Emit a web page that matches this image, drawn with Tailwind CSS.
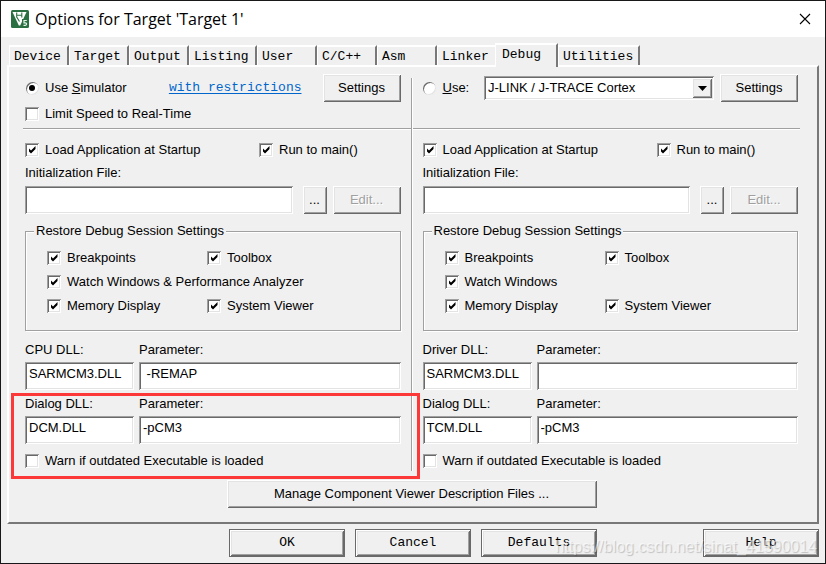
<!DOCTYPE html>
<html lang="en">
<head>
<meta charset="utf-8">
<title>Options for Target 'Target 1'</title>
<script src="https://cdn.jsdelivr.net/npm/@tailwindcss/browser@4"></script>
</head>
<body class="bg-[#f0f0f0] text-black">
<svg class="hidden" aria-hidden="true">
  <symbol id="tick" viewBox="0 0 14 14"><path d="M4 5.5v3l2 2 4.5-4.500v-3L6 7.500z" fill="#000"/></symbol>
</svg>
<div class="relative flex min-h-screen flex-col border border-[#1a171b] bg-[#f0f0f0] font-['Liberation_Sans',Arial,sans-serif] text-[13px] leading-5">
  <header class="flex h-9 items-center bg-white pl-[10px] pr-[14px]">
    <svg class="size-[18px]" viewBox="0 0 18 18" aria-hidden="true">
      <rect width="18" height="18" rx="1.500" fill="#2a6f42"/>
      <path d="M1.500 2H15.500L9.200 15.500H7.800z" fill="#fff"/>
      <path d="M5.700 2.500v5M10.800 2.500v5M5.700 7l2.800 4.500M6 5.200h4.500" fill="none" stroke="#2a6f42" stroke-width="1.100"/>
      <path d="M11 9h6v8h-6z" fill="#2a6f42"/>
      <path d="M15.800 10.500h-2.800v2.300h1.300q1.300.1 1.300 1.300t-1.300 1.300H12.500" fill="none" stroke="#e6f2ea" stroke-width="1.200"/>
    </svg>
    <h1 class="ml-[6px] flex-1 font-['Open_Sans','Noto_Sans',sans-serif] text-[16px]">Options for Target 'Target 1'</h1>
    <button aria-label="Close" class="size-3"><svg viewBox="0 0 12 12" class="size-3"><path d="M1 1l10 10M11 1L1 11" stroke="#000" stroke-width="1.100"/></svg></button>
  </header>

  <nav role="tablist" class="mt-[6px] flex items-end pl-[8px] font-['Liberation_Mono','Courier_New',monospace] text-[13px]">
    <button role="tab" class="h-5 w-[60px] border-t-2 border-l border-r-2 border-t-white border-l-white border-r-[#787878] pl-1 text-left">Device</button>
    <button role="tab" class="h-5 w-[60px] border-t-2 border-l border-r-2 border-t-white border-l-white border-r-[#787878] pl-1 text-left">Target</button>
    <button role="tab" class="h-5 w-[60px] border-t-2 border-l border-r-2 border-t-white border-l-white border-r-[#787878] pl-1 text-left">Output</button>
    <button role="tab" class="h-5 w-[68px] border-t-2 border-l border-r-2 border-t-white border-l-white border-r-[#787878] pl-1 text-left">Listing</button>
    <button role="tab" class="h-5 w-[60px] border-t-2 border-l border-r-2 border-t-white border-l-white border-r-[#787878] pl-1 text-left">User</button>
    <button role="tab" class="h-5 w-[60px] border-t-2 border-l border-r-2 border-t-white border-l-white border-r-[#787878] pl-1 text-left">C/C++</button>
    <button role="tab" class="h-5 w-[60px] border-t-2 border-l border-r-2 border-t-white border-l-white border-r-[#787878] pl-1 text-left">Asm</button>
    <button role="tab" class="h-5 w-[58px] border-t-2 border-l border-t-white border-l-white pl-1 text-left">Linker</button>
    <button role="tab" aria-selected="true" class="relative z-10 -mb-[2px] h-6 w-[63px] border-t-2 border-l border-r-2 border-t-white border-l-white border-r-[#787878] bg-[#f0f0f0] pb-1 pl-[6px] text-left">Debug</button>
    <button role="tab" class="h-5 w-[82px] border-t-2 border-l border-r-2 border-t-white border-l-white border-r-[#787878] pl-1 text-left">Utilities</button>
  </nav>

  <main class="mr-[6px] ml-[6px] border-t-2 border-r-2 border-b-2 border-l-2 border-t-white border-r-[#787878] border-b-[#787878] border-l-white pt-[7px] pr-[17px] pb-[14px] pl-[14px]">
    <div class="grid grid-cols-[1fr_2px_1fr]">
      <section aria-label="Simulator">
        <div class="flex h-7 items-center pr-[10px] pl-[2px]">
          <label class="flex items-center gap-[6px]"><span class="relative grid size-[14px] place-items-center"><input type="radio" name="mode" checked class="peer col-start-1 row-start-1 size-[13px] appearance-none rounded-full bg-white shadow-[inset_1px_1px_0_#696969,inset_-1px_-1px_0_#e3e3e3]"><span class="col-start-1 row-start-1 hidden size-[6px] rounded-full bg-black peer-checked:block"></span></span><span>Use <u>S</u>imulator</span></label>
          <a href="#" class="ml-auto font-['Liberation_Mono','Courier_New',monospace] text-[13px] text-[#0066cc] underline underline-offset-2">with restrictions</a>
          <button class="ml-[21px] h-7 w-[78px] shadow-[inset_1px_1px_0_#fff,inset_-1px_-1px_0_#696969,inset_2px_2px_0_#e3e3e3,inset_-2px_-2px_0_#a0a0a0]">Settings</button>
        </div>
        <div class="flex h-6 items-center pl-[2px]">
          <label class="flex items-center gap-[6px]"><span class="relative grid size-[14px]"><input type="checkbox" class="peer size-[14px] appearance-none bg-white shadow-[inset_1px_1px_0_#a0a0a0,inset_-1px_-1px_0_#fff,inset_2px_2px_0_#696969,inset_-2px_-2px_0_#e3e3e3]"><svg class="pointer-events-none absolute inset-0 hidden size-[14px] peer-checked:block"><use href="#tick"/></svg></span>Limit Speed to Real-Time</label>
        </div>
        <hr class="mt-[2px] h-[2px] border-0 border-t border-[#a0a0a0] bg-white">
        <div class="pr-[10px] pl-[2px]">
          <div class="mt-2 flex h-6 items-center">
            <label class="flex w-[234px] items-center gap-[6px]"><span class="relative grid size-[14px]"><input type="checkbox" checked class="peer size-[14px] appearance-none bg-white shadow-[inset_1px_1px_0_#a0a0a0,inset_-1px_-1px_0_#fff,inset_2px_2px_0_#696969,inset_-2px_-2px_0_#e3e3e3]"><svg class="pointer-events-none absolute inset-0 hidden size-[14px] peer-checked:block"><use href="#tick"/></svg></span>Load Application at Startup</label>
            <label class="flex items-center gap-[6px]"><span class="relative grid size-[14px]"><input type="checkbox" checked class="peer size-[14px] appearance-none bg-white shadow-[inset_1px_1px_0_#a0a0a0,inset_-1px_-1px_0_#fff,inset_2px_2px_0_#696969,inset_-2px_-2px_0_#e3e3e3]"><svg class="pointer-events-none absolute inset-0 hidden size-[14px] peer-checked:block"><use href="#tick"/></svg></span>Run to main()</label>
          </div>
          <label for="init-l" class="flex h-[22px] items-center">Initialization File:</label>
          <div class="mt-[2px] flex">
            <input id="init-l" class="h-7 min-w-0 flex-1 bg-white px-1 shadow-[inset_1px_1px_0_#a0a0a0,inset_-1px_-1px_0_#fff,inset_2px_2px_0_#696969,inset_-2px_-2px_0_#e3e3e3]">
            <button class="ml-[10px] h-7 w-6 shadow-[inset_1px_1px_0_#fff,inset_-1px_-1px_0_#696969,inset_2px_2px_0_#e3e3e3,inset_-2px_-2px_0_#a0a0a0]">...</button>
            <button disabled class="ml-[6px] h-7 w-[68px] text-[#a0a0a0] shadow-[inset_1px_1px_0_#fff,inset_-1px_-1px_0_#696969,inset_2px_2px_0_#e3e3e3,inset_-2px_-2px_0_#a0a0a0] text-shadow-[1px_1px_0_#fff]">Edit...</button>
          </div>
          <fieldset class="mt-2 border border-[#a0a0a0] pt-[6px] pb-3 pl-[21px] shadow-[1px_1px_0_#fff,inset_1px_1px_0_#fff]">
            <legend class="-ml-[13px] bg-[#f0f0f0] px-[2px] leading-[18px]">Restore Debug Session Settings</legend>
            <div class="grid grid-cols-[160px_1fr]">
              <label class="flex h-6 items-center gap-[6px]"><span class="relative grid size-[14px]"><input type="checkbox" checked class="peer size-[14px] appearance-none bg-white shadow-[inset_1px_1px_0_#a0a0a0,inset_-1px_-1px_0_#fff,inset_2px_2px_0_#696969,inset_-2px_-2px_0_#e3e3e3]"><svg class="pointer-events-none absolute inset-0 hidden size-[14px] peer-checked:block"><use href="#tick"/></svg></span>Breakpoints</label>
              <label class="flex h-6 items-center gap-[6px]"><span class="relative grid size-[14px]"><input type="checkbox" checked class="peer size-[14px] appearance-none bg-white shadow-[inset_1px_1px_0_#a0a0a0,inset_-1px_-1px_0_#fff,inset_2px_2px_0_#696969,inset_-2px_-2px_0_#e3e3e3]"><svg class="pointer-events-none absolute inset-0 hidden size-[14px] peer-checked:block"><use href="#tick"/></svg></span>Toolbox</label>
              <label class="col-span-2 flex h-6 items-center gap-[6px]"><span class="relative grid size-[14px]"><input type="checkbox" checked class="peer size-[14px] appearance-none bg-white shadow-[inset_1px_1px_0_#a0a0a0,inset_-1px_-1px_0_#fff,inset_2px_2px_0_#696969,inset_-2px_-2px_0_#e3e3e3]"><svg class="pointer-events-none absolute inset-0 hidden size-[14px] peer-checked:block"><use href="#tick"/></svg></span>Watch Windows &amp; Performance Analyzer</label>
              <label class="flex h-6 items-center gap-[6px]"><span class="relative grid size-[14px]"><input type="checkbox" checked class="peer size-[14px] appearance-none bg-white shadow-[inset_1px_1px_0_#a0a0a0,inset_-1px_-1px_0_#fff,inset_2px_2px_0_#696969,inset_-2px_-2px_0_#e3e3e3]"><svg class="pointer-events-none absolute inset-0 hidden size-[14px] peer-checked:block"><use href="#tick"/></svg></span>Memory Display</label>
              <label class="flex h-6 items-center gap-[6px]"><span class="relative grid size-[14px]"><input type="checkbox" checked class="peer size-[14px] appearance-none bg-white shadow-[inset_1px_1px_0_#a0a0a0,inset_-1px_-1px_0_#fff,inset_2px_2px_0_#696969,inset_-2px_-2px_0_#e3e3e3]"><svg class="pointer-events-none absolute inset-0 hidden size-[14px] peer-checked:block"><use href="#tick"/></svg></span>System Viewer</label>
            </div>
          </fieldset>
          <div class="mt-[9px] grid grid-cols-[109px_1fr] gap-x-[5px]">
            <label for="cpu-dll" class="h-[22px]">CPU DLL:</label>
            <label for="cpu-par" class="h-[22px]">Parameter:</label>
            <input id="cpu-dll" value="SARMCM3.DLL" class="h-7 min-w-0 bg-white px-1 pb-[5px] shadow-[inset_1px_1px_0_#a0a0a0,inset_-1px_-1px_0_#fff,inset_2px_2px_0_#696969,inset_-2px_-2px_0_#e3e3e3]">
            <input id="cpu-par" value=" -REMAP" class="h-7 min-w-0 bg-white px-1 pb-[5px] shadow-[inset_1px_1px_0_#a0a0a0,inset_-1px_-1px_0_#fff,inset_2px_2px_0_#696969,inset_-2px_-2px_0_#e3e3e3]">
          </div>
          <div class="relative mt-1">
            <div class="grid grid-cols-[109px_1fr] gap-x-[5px]">
              <label for="dlg-dll" class="h-[22px]">Dialog DLL:</label>
              <label for="dlg-par" class="h-[22px]">Parameter:</label>
              <input id="dlg-dll" value="DCM.DLL" class="h-7 min-w-0 bg-white px-1 pb-[5px] shadow-[inset_1px_1px_0_#a0a0a0,inset_-1px_-1px_0_#fff,inset_2px_2px_0_#696969,inset_-2px_-2px_0_#e3e3e3]">
              <input id="dlg-par" value="-pCM3" class="h-7 min-w-0 bg-white px-1 pb-[5px] shadow-[inset_1px_1px_0_#a0a0a0,inset_-1px_-1px_0_#fff,inset_2px_2px_0_#696969,inset_-2px_-2px_0_#e3e3e3]">
            </div>
            <label class="mt-[5px] flex h-6 items-center gap-[6px]"><span class="relative grid size-[14px]"><input type="checkbox" class="peer size-[14px] appearance-none bg-white shadow-[inset_1px_1px_0_#a0a0a0,inset_-1px_-1px_0_#fff,inset_2px_2px_0_#696969,inset_-2px_-2px_0_#e3e3e3]"><svg class="pointer-events-none absolute inset-0 hidden size-[14px] peer-checked:block"><use href="#tick"/></svg></span>Warn if outdated Executable is loaded</label>
            <div class="pointer-events-none absolute -top-[1px] -right-[19px] -bottom-[6px] -left-[14px] border-3 border-[#fc3838]"></div>
          </div>
        </div>
      </section>

      <div class="mt-1 mb-[2px] border-l border-[#a0a0a0] bg-white"></div>

      <section aria-label="Hardware debugger">
        <div class="flex h-7 items-center pr-[2px] pl-[10px]">
          <label class="flex items-center gap-[6px]"><span class="relative grid size-[14px] place-items-center"><input type="radio" name="mode" class="peer col-start-1 row-start-1 size-[13px] appearance-none rounded-full bg-white shadow-[inset_1px_1px_0_#696969,inset_-1px_-1px_0_#e3e3e3]"><span class="col-start-1 row-start-1 hidden size-[6px] rounded-full bg-black peer-checked:block"></span></span><span><u>U</u>se:</span></label>
          <div class="relative ml-auto h-6 w-[230px]">
            <select aria-label="Debug adapter" class="h-6 w-full appearance-none bg-white pl-1 shadow-[inset_1px_1px_0_#a0a0a0,inset_-1px_-1px_0_#fff,inset_2px_2px_0_#696969,inset_-2px_-2px_0_#e3e3e3]"><option>J-LINK / J-TRACE Cortex</option></select>
            <span class="pointer-events-none absolute inset-y-[2px] right-[2px] grid w-5 place-items-center bg-[#f0f0f0] shadow-[inset_1px_1px_0_#fff,inset_-1px_-1px_0_#696969,inset_2px_2px_0_#e3e3e3,inset_-2px_-2px_0_#a0a0a0]"><svg class="h-[5px] w-[9px]" viewBox="0 0 9 5"><path d="M0 0h9L4.500 5z"/></svg></span>
          </div>
          <button class="ml-[6px] h-7 w-[78px] shadow-[inset_1px_1px_0_#fff,inset_-1px_-1px_0_#696969,inset_2px_2px_0_#e3e3e3,inset_-2px_-2px_0_#a0a0a0]">Settings</button>
        </div>
        <hr class="mt-[26px] h-[2px] border-0 border-t border-[#a0a0a0] bg-white">
        <div class="pr-[2px] pl-[10px]">
          <div class="mt-2 flex h-6 items-center">
            <label class="flex w-[234px] items-center gap-[6px]"><span class="relative grid size-[14px]"><input type="checkbox" checked class="peer size-[14px] appearance-none bg-white shadow-[inset_1px_1px_0_#a0a0a0,inset_-1px_-1px_0_#fff,inset_2px_2px_0_#696969,inset_-2px_-2px_0_#e3e3e3]"><svg class="pointer-events-none absolute inset-0 hidden size-[14px] peer-checked:block"><use href="#tick"/></svg></span>Load Application at Startup</label>
            <label class="flex items-center gap-[6px]"><span class="relative grid size-[14px]"><input type="checkbox" checked class="peer size-[14px] appearance-none bg-white shadow-[inset_1px_1px_0_#a0a0a0,inset_-1px_-1px_0_#fff,inset_2px_2px_0_#696969,inset_-2px_-2px_0_#e3e3e3]"><svg class="pointer-events-none absolute inset-0 hidden size-[14px] peer-checked:block"><use href="#tick"/></svg></span>Run to main()</label>
          </div>
          <label for="init-r" class="flex h-[22px] items-center">Initialization File:</label>
          <div class="mt-[2px] flex">
            <input id="init-r" class="h-7 min-w-0 flex-1 bg-white px-1 shadow-[inset_1px_1px_0_#a0a0a0,inset_-1px_-1px_0_#fff,inset_2px_2px_0_#696969,inset_-2px_-2px_0_#e3e3e3]">
            <button class="ml-[10px] h-7 w-6 shadow-[inset_1px_1px_0_#fff,inset_-1px_-1px_0_#696969,inset_2px_2px_0_#e3e3e3,inset_-2px_-2px_0_#a0a0a0]">...</button>
            <button disabled class="ml-[6px] h-7 w-[68px] text-[#a0a0a0] shadow-[inset_1px_1px_0_#fff,inset_-1px_-1px_0_#696969,inset_2px_2px_0_#e3e3e3,inset_-2px_-2px_0_#a0a0a0] text-shadow-[1px_1px_0_#fff]">Edit...</button>
          </div>
          <fieldset class="mt-2 border border-[#a0a0a0] pt-[6px] pb-3 pl-[21px] shadow-[1px_1px_0_#fff,inset_1px_1px_0_#fff]">
            <legend class="-ml-[13px] bg-[#f0f0f0] px-[2px] leading-[18px]">Restore Debug Session Settings</legend>
            <div class="grid grid-cols-[160px_1fr]">
              <label class="flex h-6 items-center gap-[6px]"><span class="relative grid size-[14px]"><input type="checkbox" checked class="peer size-[14px] appearance-none bg-white shadow-[inset_1px_1px_0_#a0a0a0,inset_-1px_-1px_0_#fff,inset_2px_2px_0_#696969,inset_-2px_-2px_0_#e3e3e3]"><svg class="pointer-events-none absolute inset-0 hidden size-[14px] peer-checked:block"><use href="#tick"/></svg></span>Breakpoints</label>
              <label class="flex h-6 items-center gap-[6px]"><span class="relative grid size-[14px]"><input type="checkbox" checked class="peer size-[14px] appearance-none bg-white shadow-[inset_1px_1px_0_#a0a0a0,inset_-1px_-1px_0_#fff,inset_2px_2px_0_#696969,inset_-2px_-2px_0_#e3e3e3]"><svg class="pointer-events-none absolute inset-0 hidden size-[14px] peer-checked:block"><use href="#tick"/></svg></span>Toolbox</label>
              <label class="col-span-2 flex h-6 items-center gap-[6px]"><span class="relative grid size-[14px]"><input type="checkbox" checked class="peer size-[14px] appearance-none bg-white shadow-[inset_1px_1px_0_#a0a0a0,inset_-1px_-1px_0_#fff,inset_2px_2px_0_#696969,inset_-2px_-2px_0_#e3e3e3]"><svg class="pointer-events-none absolute inset-0 hidden size-[14px] peer-checked:block"><use href="#tick"/></svg></span>Watch Windows</label>
              <label class="flex h-6 items-center gap-[6px]"><span class="relative grid size-[14px]"><input type="checkbox" checked class="peer size-[14px] appearance-none bg-white shadow-[inset_1px_1px_0_#a0a0a0,inset_-1px_-1px_0_#fff,inset_2px_2px_0_#696969,inset_-2px_-2px_0_#e3e3e3]"><svg class="pointer-events-none absolute inset-0 hidden size-[14px] peer-checked:block"><use href="#tick"/></svg></span>Memory Display</label>
              <label class="flex h-6 items-center gap-[6px]"><span class="relative grid size-[14px]"><input type="checkbox" checked class="peer size-[14px] appearance-none bg-white shadow-[inset_1px_1px_0_#a0a0a0,inset_-1px_-1px_0_#fff,inset_2px_2px_0_#696969,inset_-2px_-2px_0_#e3e3e3]"><svg class="pointer-events-none absolute inset-0 hidden size-[14px] peer-checked:block"><use href="#tick"/></svg></span>System Viewer</label>
            </div>
          </fieldset>
          <div class="mt-[9px] grid grid-cols-[109px_1fr] gap-x-[5px]">
            <label for="drv-dll" class="h-[22px]">Driver DLL:</label>
            <label for="drv-par" class="h-[22px]">Parameter:</label>
            <input id="drv-dll" value="SARMCM3.DLL" class="h-7 min-w-0 bg-white px-1 pb-[5px] shadow-[inset_1px_1px_0_#a0a0a0,inset_-1px_-1px_0_#fff,inset_2px_2px_0_#696969,inset_-2px_-2px_0_#e3e3e3]">
            <input id="drv-par" class="h-7 min-w-0 bg-white px-1 pb-[5px] shadow-[inset_1px_1px_0_#a0a0a0,inset_-1px_-1px_0_#fff,inset_2px_2px_0_#696969,inset_-2px_-2px_0_#e3e3e3]">
          </div>
          <div class="mt-1 grid grid-cols-[109px_1fr] gap-x-[5px]">
            <label for="tdlg-dll" class="h-[22px]">Dialog DLL:</label>
            <label for="tdlg-par" class="h-[22px]">Parameter:</label>
            <input id="tdlg-dll" value="TCM.DLL" class="h-7 min-w-0 bg-white px-1 pb-[5px] shadow-[inset_1px_1px_0_#a0a0a0,inset_-1px_-1px_0_#fff,inset_2px_2px_0_#696969,inset_-2px_-2px_0_#e3e3e3]">
            <input id="tdlg-par" value="-pCM3" class="h-7 min-w-0 bg-white px-1 pb-[5px] shadow-[inset_1px_1px_0_#a0a0a0,inset_-1px_-1px_0_#fff,inset_2px_2px_0_#696969,inset_-2px_-2px_0_#e3e3e3]">
          </div>
          <label class="mt-[5px] flex h-6 items-center gap-[6px]"><span class="relative grid size-[14px]"><input type="checkbox" class="peer size-[14px] appearance-none bg-white shadow-[inset_1px_1px_0_#a0a0a0,inset_-1px_-1px_0_#fff,inset_2px_2px_0_#696969,inset_-2px_-2px_0_#e3e3e3]"><svg class="pointer-events-none absolute inset-0 hidden size-[14px] peer-checked:block"><use href="#tick"/></svg></span>Warn if outdated Executable is loaded</label>
        </div>
      </section>
    </div>
    <button class="mx-auto mt-[7px] block h-7 w-[370px] shadow-[inset_1px_1px_0_#fff,inset_-1px_-1px_0_#696969,inset_2px_2px_0_#e3e3e3,inset_-2px_-2px_0_#a0a0a0]">Manage Component Viewer Description Files ...</button>
  </main>

  <footer class="mt-[5px] mb-[5px] flex gap-[10px] pr-[6px] pl-[228px] font-['Liberation_Mono','Courier_New',monospace] text-[13px]">
    <button class="h-7 w-[116px] border border-[#696969] shadow-[inset_1px_1px_0_#fff,inset_-1px_-1px_0_#696969,inset_2px_2px_0_#e3e3e3,inset_-2px_-2px_0_#a0a0a0]">OK</button>
    <button class="h-7 w-[116px] border border-[#696969] shadow-[inset_1px_1px_0_#fff,inset_-1px_-1px_0_#696969,inset_2px_2px_0_#e3e3e3,inset_-2px_-2px_0_#a0a0a0]">Cancel</button>
    <button class="h-7 w-[116px] border border-[#696969] shadow-[inset_1px_1px_0_#fff,inset_-1px_-1px_0_#696969,inset_2px_2px_0_#e3e3e3,inset_-2px_-2px_0_#a0a0a0]">Defaults</button>
    <button class="ml-auto h-7 w-[116px] border border-[#696969] shadow-[inset_1px_1px_0_#fff,inset_-1px_-1px_0_#696969,inset_2px_2px_0_#e3e3e3,inset_-2px_-2px_0_#a0a0a0]">Help</button>
  </footer>
  <p class="pointer-events-none absolute right-[8px] bottom-[6px] text-[16px] text-white/60 text-shadow-[1px_1px_1px_#00000033]">https://blog.csdn.net/sinat_41590014</p>
</div>
</body>
</html>
